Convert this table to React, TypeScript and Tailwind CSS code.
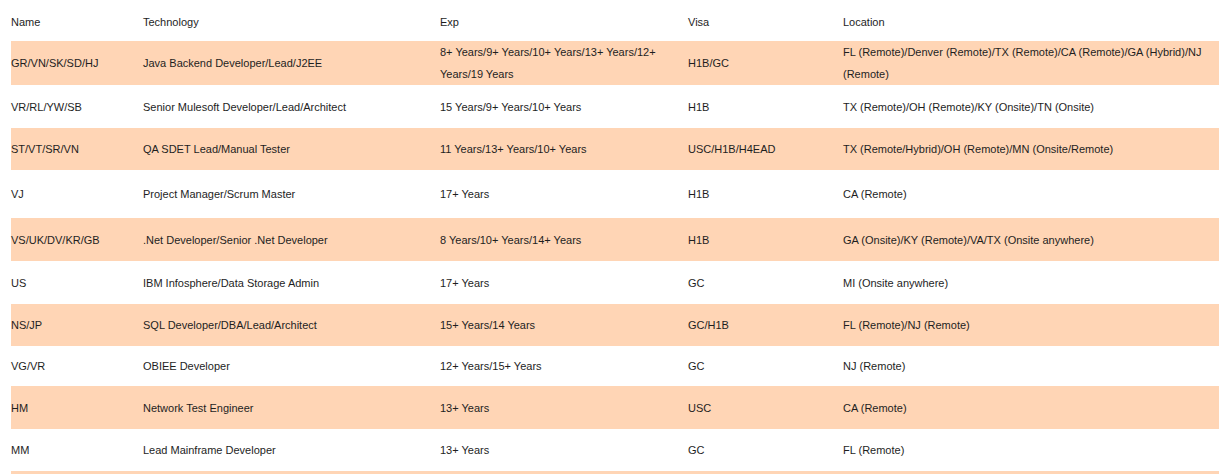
import React from "react";

type Row = {
  name: string;
  tech: string;
  exp: string;
  visa: string;
  location: string;
  h: string;
};

const rows: Row[] = [
  {
    name: "GR/VN/SK/SD/HJ",
    tech: "Java Backend Developer/Lead/J2EE",
    exp: "8+ Years/9+ Years/10+ Years/13+ Years/12+ Years/19 Years",
    visa: "H1B/GC",
    location: "FL (Remote)/Denver (Remote)/TX (Remote)/CA (Remote)/GA (Hybrid)/NJ (Remote)",
    h: "h-[44px]",
  },
  {
    name: "VR/RL/YW/SB",
    tech: "Senior Mulesoft Developer/Lead/Architect",
    exp: "15 Years/9+ Years/10+ Years",
    visa: "H1B",
    location: "TX (Remote)/OH (Remote)/KY (Onsite)/TN (Onsite)",
    h: "h-[43px]",
  },
  {
    name: "ST/VT/SR/VN",
    tech: "QA SDET Lead/Manual Tester",
    exp: "11 Years/13+ Years/10+ Years",
    visa: "USC/H1B/H4EAD",
    location: "TX (Remote/Hybrid)/OH (Remote)/MN (Onsite/Remote)",
    h: "h-[42px]",
  },
  {
    name: "VJ",
    tech: "Project Manager/Scrum Master",
    exp: "17+ Years",
    visa: "H1B",
    location: "CA (Remote)",
    h: "h-[48px]",
  },
  {
    name: "VS/UK/DV/KR/GB",
    tech: ".Net Developer/Senior .Net Developer",
    exp: "8 Years/10+ Years/14+ Years",
    visa: "H1B",
    location: "GA (Onsite)/KY (Remote)/VA/TX (Onsite anywhere)",
    h: "h-[43px]",
  },
  {
    name: "US",
    tech: "IBM Infosphere/Data Storage Admin",
    exp: "17+ Years",
    visa: "GC",
    location: "MI (Onsite anywhere)",
    h: "h-[43px]",
  },
  {
    name: "NS/JP",
    tech: "SQL Developer/DBA/Lead/Architect",
    exp: "15+ Years/14 Years",
    visa: "GC/H1B",
    location: "FL (Remote)/NJ (Remote)",
    h: "h-[42px]",
  },
  {
    name: "VG/VR",
    tech: "OBIEE Developer",
    exp: "12+ Years/15+ Years",
    visa: "GC",
    location: "NJ (Remote)",
    h: "h-[40px]",
  },
  {
    name: "HM",
    tech: "Network Test Engineer",
    exp: "13+ Years",
    visa: "USC",
    location: "CA (Remote)",
    h: "h-[43px]",
  },
  {
    name: "MM",
    tech: "Lead Mainframe Developer",
    exp: "13+ Years",
    visa: "GC",
    location: "FL (Remote)",
    h: "h-[42px]",
  },
  {
    name: "",
    tech: "",
    exp: "",
    visa: "",
    location: "",
    h: "h-[43px]",
  },
];

export default function App() {
  return (
    <div className="w-[1229px] h-[474px] overflow-hidden bg-white pl-[11px] font-['Liberation_Sans',Arial,sans-serif] text-[11px] leading-[22px] text-[#1e1e1e]">
      <table className="w-[1208px] table-fixed border-collapse">
        <colgroup>
          <col className="w-[132px]" />
          <col className="w-[297px]" />
          <col className="w-[248px]" />
          <col className="w-[155px]" />
          <col className="w-[376px]" />
        </colgroup>
        <thead>
          <tr className="h-[41px] text-left align-middle">
            <th className="pt-[2px] font-normal">Name</th>
            <th className="pt-[2px] font-normal">Technology</th>
            <th className="pt-[2px] font-normal">Exp</th>
            <th className="pt-[2px] font-normal">Visa</th>
            <th className="pt-[2px] font-normal">Location</th>
          </tr>
        </thead>
        <tbody>
          {rows.map((r, i) => (
            <tr
              key={i}
              className={`${r.h} align-middle ${i % 2 === 0 ? "bg-[#ffd5b5]" : "bg-white"}`}
            >
              <td className="pr-3">{r.name}</td>
              <td className="pr-3">{r.tech}</td>
              <td className="pr-[24px]">{r.exp}</td>
              <td className="pr-3">{r.visa}</td>
              <td className="pr-[14px]">{r.location}</td>
            </tr>
          ))}
        </tbody>
      </table>
    </div>
  );
}
